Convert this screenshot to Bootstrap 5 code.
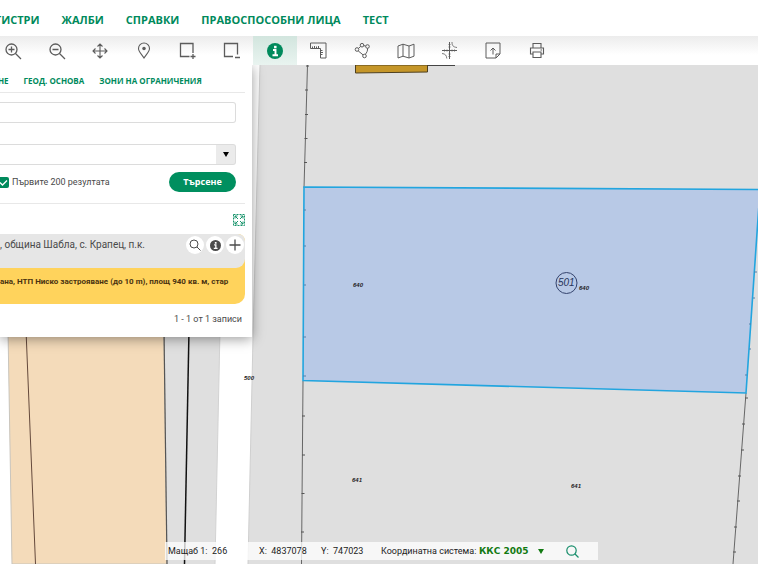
<!DOCTYPE html>
<html lang="bg">
<head>
<meta charset="utf-8">
<meta name="viewport" content="width=device-width, initial-scale=1">
<title>Кадастрална карта</title>
<link href="https://cdn.jsdelivr.net/npm/bootstrap@5.3.0/dist/css/bootstrap.min.css" rel="stylesheet">
<style>
  :root { --kais-green: #008a5c; --kais-text: #4a4a4a; }
  body { font-family: Roboto, "Noto Sans", sans-serif; font-size: 9px; line-height: 12px; color: var(--kais-text); background: #fff; }
  svg { display: block; fill: none; stroke: currentColor; }
  a { color: var(--kais-green); text-decoration: none; font-weight: 700; white-space: nowrap; }
  button { border: 0; background: none; padding: 0; color: inherit; }
  .main-menu, .sub-menu, .find-button { font-family: "Open Sans", "Noto Sans", sans-serif; }
  .main-menu { height: 36px; gap: 22px; font-size: 11px; padding-top: 4px; margin-left: -5px; }
  .toolbar-strip { height: 29px; background: linear-gradient(#ececec, #fff 65%); color: #5c5c5c; z-index: 3; }
  .tool-group { width: 568px; margin-left: -9px; }
  .tool-group button { flex: 1 0 0; }
  .tool-group button.active { background: linear-gradient(#d2e5de, #e9f4f0); color: var(--kais-green); }
  .map-drawing text { font-family: "Liberation Sans", Arial, sans-serif; font-style: italic; stroke: none; fill: #222; font-size: 6px; font-weight: 700; }
  .map-drawing .block-number { font-size: 10px; font-weight: 400; fill: #27345a; }
  .search-panel { width: 252px; height: 272px; background: #fff; box-shadow: 0 2px 12px rgba(0,0,0,.4); z-index: 2; }
  .panel-inset { margin-right: 7px; }
  .form-inset { margin-right: 16px; }
  .sub-menu { height: 28px; gap: 15px; font-size: 8px; padding-top: 5px; margin-left: -2px; border-bottom: 1px solid #e8e8e8; }
  .search-form { padding-top: 9px; }
  .search-select { margin-top: 21px; }
  .plain-field { display: block; width: 100%; height: 21px; border: 1px solid #dcdcdc; border-left: 0; border-radius: 0 3px 3px 0; background-color: #fff; font-size: 9px; }
  .arrow-field { appearance: none; background: url("data:image/svg+xml,%3Csvg xmlns='http://www.w3.org/2000/svg' width='19' height='19'%3E%3Cpath fill='%23ebebeb' d='M0 0h19v19H0z'/%3E%3Cpath d='M7 7h6l-3 5z'/%3E%3C/svg%3E") right center no-repeat #fff; }
  .limit-check { appearance: none; width: 11px; height: 11px; margin: 0 3px 0 -2px; border-radius: 2px; background: url("data:image/svg+xml,%3Csvg xmlns='http://www.w3.org/2000/svg' viewBox='0 0 11 11'%3E%3Cpath fill='none' stroke='%23fff' stroke-width='1.300' d='M2 5.500l2.500 2.500L9 3.500'/%3E%3C/svg%3E") #008a5c; }
  .find-button { width: 67px; height: 20px; margin-right: 9px; border-radius: 10px; background: #008f5f; color: #fff; font-weight: 700; }
  .search-row { height: 39px; border-bottom: 1px solid #e8e8e8; padding-bottom: 4px; }
  .expand-row { height: 30px; padding-top: 2px; color: #17936b; }
  .result-item { background: #ffd35c; border-radius: 0 7px 10px 0; overflow: hidden; }
  .result-head { height: 34px; background: #e6e6e6; border-radius: 0 0 9px 0; padding: 2px 1px 0 0; }
  .head-text { font-size: 10px; line-height: 18px; }
  .head-tools { gap: 2px; }
  .result-head button { width: 18px; height: 18px; border-radius: 9px; background: #fff; color: #4c4c4c; }
  .result-body { height: 36px; padding-top: 8px; font-size: 8px; font-weight: 700; color: #4a3210; white-space: nowrap; }
  .record-count { padding: 9px 10px 0 0; }
  .status-strip { left: 165px; bottom: 4px; height: 18px; color: #222; white-space: nowrap; z-index: 1; background: rgba(255,255,255,.75); width: 433px; padding-left: 3px; }
  .scale-value { width: 91px; }
  .x-value { width: 62px; }
  .y-value { width: 60px; }
  .crs-label { width: 94px; }
  .system-select { appearance: none; border: 0; color: #127a12; font-family: "DejaVu Sans", sans-serif; font-size: 9px; font-weight: 700; width: 70px; padding: 0 0 0 4px; height: 18px; background: url("data:image/svg+xml,%3Csvg xmlns='http://www.w3.org/2000/svg' width='7' height='7'%3E%3Cpath fill='%23127a12' d='M0 1h6l-3 5z'/%3E%3C/svg%3E") right center no-repeat; }
  .crs-search { margin-left: 21px; color: #198e6c; }
</style>
<script src="https://cdn.jsdelivr.net/npm/bootstrap@5.3.0/dist/js/bootstrap.bundle.min.js"></script>
</head>
<body class="d-flex flex-column min-vh-100 overflow-hidden">
<nav class="main-menu d-flex align-items-center" aria-label="Главно меню">
  <a href="#">ГИСТРИ</a><a href="#">ЖАЛБИ</a><a href="#">СПРАВКИ</a><a href="#">ПРАВОСПОСОБНИ ЛИЦА</a><a href="#">ТЕСТ</a>
</nav>
<div class="toolbar-strip position-relative d-flex">
  <div class="tool-group d-flex" role="toolbar" aria-label="Инструменти">
    <button class="d-flex align-items-center justify-content-center" aria-label="Приближаване"><svg width="18" height="18" viewBox="0 0 18 18" stroke-width="1.3"><circle cx="7.500" cy="7.500" r="5.500"/><path d="M11.500 11.500L17 17M4.500 7.500h6M7.500 4.500v6"/></svg></button>
    <button class="d-flex align-items-center justify-content-center" aria-label="Отдалечаване"><svg width="18" height="18" viewBox="0 0 18 18" stroke-width="1.3"><circle cx="7.500" cy="7.500" r="5.500"/><path d="M11.500 11.500L17 17M4.500 7.500h6"/></svg></button>
    <button class="d-flex align-items-center justify-content-center" aria-label="Местене"><svg width="16" height="16" viewBox="0 0 16 16" stroke-width="1.1"><path d="M8 1v14M1 8h14M5.500 3.500L8 1l2.500 2.500M5.500 12.500L8 15l2.500-2.500M3.500 5.500L1 8l2.500 2.500M12.500 5.500L15 8l-2.500 2.500"/></svg></button>
    <button class="d-flex align-items-center justify-content-center" aria-label="Местоположение"><svg width="14" height="17" viewBox="0 0 14 17" stroke-width="1.1"><path d="M7 16C5 12.500 1.500 10 1.500 6.500a5.500 5.500 0 0 1 11 0C12.500 10 9 12.500 7 16z"/><circle cx="7" cy="6.500" r="1.200" fill="currentColor"/></svg></button>
    <button class="d-flex align-items-center justify-content-center" aria-label="Добави избор"><svg width="17" height="17" viewBox="0 0 17 17" stroke-width="1.3"><path d="M10.500 14.500H1.500v-13h12.500v9.500M11.500 14.500h5M14 12v5"/></svg></button>
    <button class="d-flex align-items-center justify-content-center" aria-label="Премахни избор"><svg width="17" height="17" viewBox="0 0 17 17" stroke-width="1.3"><path d="M10 14.500H1.500v-13h13v11M12 15.500h5"/></svg></button>
    <button class="active d-flex align-items-center justify-content-center" aria-label="Информация"><svg width="16" height="16" viewBox="0 0 16 16"><circle cx="8" cy="8" r="8" fill="currentColor" stroke="none"/><path d="M8.300 2.800v2.500" stroke="#fff" stroke-width="2.500"/><path d="M6 7h2.500v5M5.500 12.200h5.500" stroke="#fff" stroke-width="1.900"/></svg></button>
    <button class="d-flex align-items-center justify-content-center" aria-label="Измерване"><svg width="17" height="17" viewBox="0 0 17 17" stroke-width="1"><path d="M.5 1h15.500v15h-5.500V6.500H.5zM2.500 6.500v-2M4.500 6.500V4M6.500 6.500v-2M8.500 6.500V4M10.500 8.500h2M10.500 10.500h2.500M10.500 12.500h2"/></svg></button>
    <button class="d-flex align-items-center justify-content-center" aria-label="Полигон"><svg width="17" height="17" viewBox="0 0 17 17" stroke-width="1"><circle cx="8" cy="3.200" r="1.800"/><circle cx="13.500" cy="4.500" r="1.800"/><circle cx="3" cy="7.500" r="1.800"/><circle cx="10.500" cy="14" r="1.800"/><path d="M4.500 6.400l2.200-2M9.700 3.600l2.100.5M13.500 6.300c.3 2.500-.7 4.300-2.200 6M4.200 8.900l4.900 4"/></svg></button>
    <button class="d-flex align-items-center justify-content-center" aria-label="Карта"><svg width="18" height="16" viewBox="0 0 18 16" stroke-width="1"><path d="M1 3l5-1.800L12 3l5-1.800v12L12 15l-6-1.800L1 15zM6 1.200v12M12 3v12"/></svg></button>
    <button class="d-flex align-items-center justify-content-center" aria-label="Координати"><svg width="17" height="17" viewBox="0 0 17 17" stroke-width=".8"><path d="M8.500 0v17M1 8.500h15" stroke-width="1"/><path d="M7.500 2.500h2M7.500 5h2M7.500 12h2M7.500 14.500h2M3.500 7.500v2M6 7.500v2M11 7.500v2M13.500 7.500v2"/><path d="M11 0c0 3.500 1 5 5 5.500M1 11.500c3.500.3 4.500 2 4.800 5"/></svg></button>
    <button class="d-flex align-items-center justify-content-center" aria-label="Експорт"><svg width="16" height="17" viewBox="0 0 16 17" stroke-width="1"><path d="M1 1h14v11l-4 4H1zM11 16v-4h4M8 12.500V6M5.500 8.500L8 6l2.500 2.500"/></svg></button>
    <button class="d-flex align-items-center justify-content-center" aria-label="Печат"><svg width="16" height="17" viewBox="0 0 16 17" stroke-width="1.100"><path d="M4 6V1.500h8V6M4 12H1.500V6h13v6H12M4 10h8v5.500H4zM11.500 8h1.500"/></svg></button>
  </div>
</div>
<main class="flex-grow-1 position-relative overflow-hidden">
  <svg class="map-drawing position-absolute top-0 start-0 w-100 h-100" viewBox="0 65 758 499" preserveAspectRatio="xMinYMin slice" role="img" aria-label="Карта на имотите">
    <path d="M8 330L12 564H215L220 330z" fill="#dfdfdf" stroke="none"/>
    <path d="M8 330L12 564H167L164 330z" fill="#f4dbba" stroke="#c9c5bd"/>
    <path d="M164 330l3 234" stroke="#555" stroke-width="1.200"/>
    <path d="M26 330l9.500 234" stroke="#64493c"/>
    <path d="M189 330l-4.500 234" stroke="#111" stroke-width="1.500"/>
    <path d="M220 330l-5 234" stroke="#d2d2d2"/>
    <path d="M260 65L253 337 248 564H758V65z" fill="#dfdfdf" stroke="none"/>
    <path d="M260 65L253 337 248 564" stroke="#cfcfcf"/>
    <path d="M307.500 65L304 188M303 381l-1.500 183M746 393l-13 171" stroke="#666"/>
    <path d="M306 66h3M305 90h3M305 114.500h3M304.500 138.500h3M304 162.500h3M302 416h3M302 455h3M301.500 493.500h3M301 532h3M745 398h3M742 424h3M741 450h3M738 476h3M737 501h3M734 527h3M733 552h3" stroke="#555"/>
    <path d="M355.500 65v8l72-1V65z" fill="#c59629" stroke="#4e4020"/>
    <path d="M428 65.500h27" stroke="#444"/>
    <path d="M304 187L760 189.500 746 393 303 380.500z" fill="#b8c9e6" stroke="#22a5df" stroke-width="1.600"/>
    <path d="M304 210h2M304 246h2M304 285h2M303 337h3M303 376h3M754 272h3M753 298h2M749 324h2M749 349h2M745 375h2" stroke="#5181ad"/>
    <circle cx="566.500" cy="283" r="10.500" stroke="#34436d"/>
    <text class="block-number" x="558" y="286">501</text>
    <text x="579" y="290">640</text><text x="353" y="287">640</text><text x="352" y="482">641</text><text x="571" y="488">641</text><text x="244" y="380">500</text>
  </svg>
  <section class="search-panel position-relative overflow-visible" aria-label="Търсене">
    <nav class="sub-menu panel-inset d-flex align-items-center" aria-label="Видове търсене"><a href="#">НЕ</a><a href="#">ГЕОД. ОСНОВА</a><a href="#">ЗОНИ НА ОГРАНИЧЕНИЯ</a></nav>
    <form class="search-form" onsubmit="return false">
      <div class="form-inset"><input class="plain-field" type="text" aria-label="Търсене по текст"></div>
      <div class="form-inset search-select"><select class="plain-field arrow-field" aria-label="Избор"><option></option></select></div>
      <div class="search-row panel-inset d-flex align-items-center">
        <input class="limit-check" type="checkbox" id="limit" checked><label for="limit">Първите 200 резултата</label>
        <button class="find-button ms-auto" type="submit">Търсене</button>
      </div>
    </form>
    <div class="expand-row panel-inset d-flex justify-content-end align-items-center"><button aria-label="Разгъване"><svg width="12" height="12" viewBox="0 0 12 12" stroke-width="1"><path d="M.5.500h11v11H.5z" stroke-dasharray="2 1"/><path d="M2 2l3 3M10 2L7 5M2 10l3-3M10 10L7 7M2 4.500V2h2.500M7.500 2H10v2.500M2 7.500V10h2.500M7.500 10H10V7.500"/></svg></button></div>
    <div class="result-item panel-inset">
      <div class="result-head d-flex">
        <span class="head-text text-nowrap">, община Шабла, с. Крапец, п.к.</span>
        <div class="head-tools ms-auto d-flex">
          <button class="d-flex align-items-center justify-content-center" aria-label="Покажи"><svg width="12" height="12" viewBox="0 0 12 12" stroke-width="1"><circle cx="5" cy="5" r="4"/><path d="M8 8l3.500 3.500"/></svg></button>
          <button class="d-flex align-items-center justify-content-center" aria-label="Информация"><svg width="11" height="11" viewBox="0 0 16 16"><circle cx="8" cy="8" r="8" fill="currentColor" stroke="none"/><path d="M8.300 2.800v2.500" stroke="#fff" stroke-width="2.500"/><path d="M6 7h2.500v5M5.500 12.200h5.500" stroke="#fff" stroke-width="1.900"/></svg></button>
          <button class="d-flex align-items-center justify-content-center" aria-label="Добави"><svg width="12" height="12" viewBox="0 0 12 12" stroke-width="1.300"><path d="M6 .5v11M.5 6h11"/></svg></button>
        </div>
      </div>
      <div class="result-body">ана, НТП Ниско застрояване (до 10 m), площ 940 кв. м, стар</div>
    </div>
    <div class="record-count text-end">1 - 1 от 1 записи</div>
  </section>
  <div class="status-strip position-absolute d-flex align-items-center">
    <span class="scale-value">Мащаб 1:&nbsp; 266</span><span class="x-value">X:&nbsp; 4837078</span><span class="y-value">Y:&nbsp; 747023</span>
    <label class="crs-label" for="crs">Координатна система:</label>
    <select class="system-select" id="crs"><option>ККС 2005</option></select>
    <button class="crs-search" aria-label="Търсене по координати"><svg width="13" height="13" viewBox="0 0 13 13" stroke-width="1.200"><circle cx="5.500" cy="5.500" r="4.700"/><path d="M9 9l3.500 3.500"/></svg></button>
  </div>
</main>
</body>
</html>
